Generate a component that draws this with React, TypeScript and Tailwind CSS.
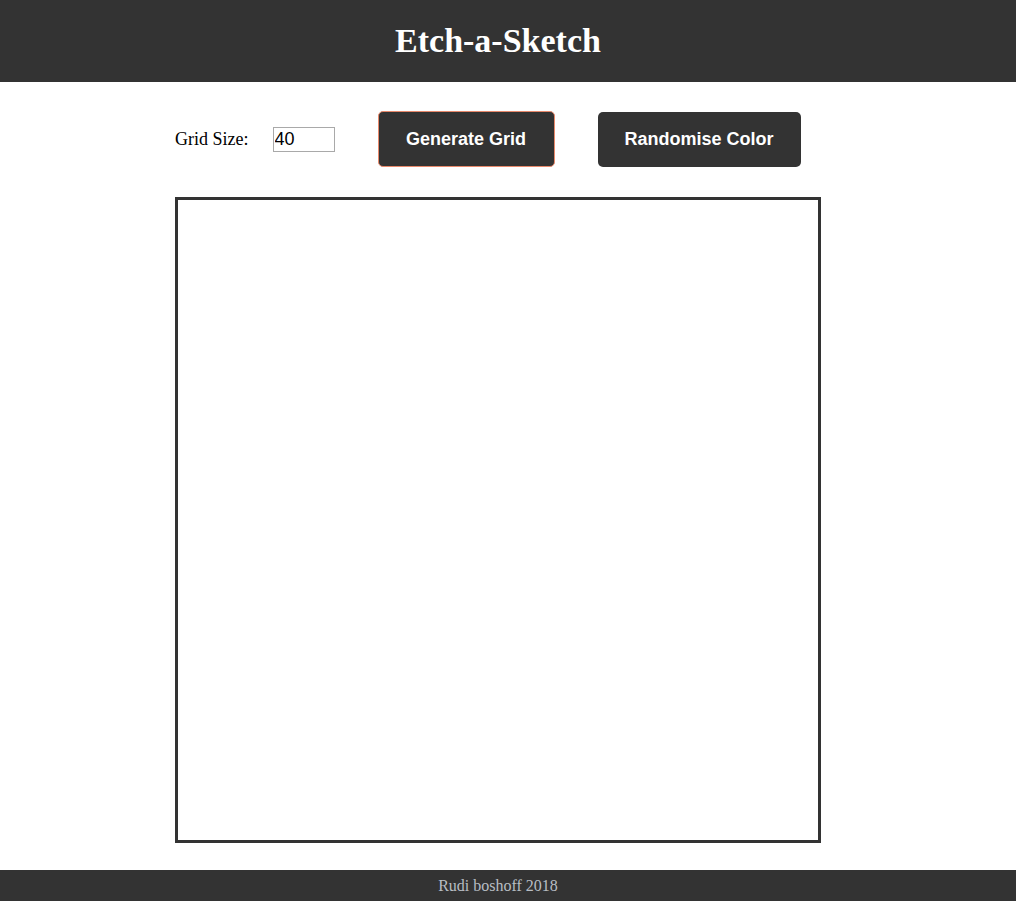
export default function App() {
  return (
    <div className="min-h-screen bg-white" style={{ fontFamily: '"Liberation Serif", "Times New Roman", serif' }}>
      {/* Header */}
      <header className="h-[82px] bg-[#333333] flex items-center justify-center pr-5">
        <h1 className="text-[34px] font-bold text-white leading-none">Etch-a-Sketch</h1>
      </header>

      <main className="pl-[175px] pt-[29px]">
        {/* Controls */}
        <div className="flex items-center h-[56px]">
          <label className="text-[18px] text-black">Grid Size:</label>
          <input
            type="text"
            defaultValue="40"
            className="ml-[24px] w-[62px] h-[25px] border border-[#a9a9a9] px-[1px] text-[18px] text-black outline-none"
            style={{ fontFamily: '"Liberation Sans", Arial, sans-serif' }}
          />
          <button
            className="ml-[43px] w-[177px] h-[56px] rounded-[5px] border border-solid border-[#e8896b] bg-[#333333] text-white text-[18px] font-bold"
            style={{ fontFamily: '"Liberation Sans", Arial, sans-serif' }}
          >
            Generate Grid
          </button>
          <button
            className="ml-[43px] w-[203px] h-[55px] rounded-[5px] bg-[#333333] text-white text-[18px] font-bold"
            style={{ fontFamily: '"Liberation Sans", Arial, sans-serif' }}
          >
            Randomise Color
          </button>
        </div>

        {/* Sketch pad */}
        <div className="mt-[30px] w-[646px] h-[646px] border-[3px] border-[#333333] bg-white" />
      </main>

      {/* Footer */}
      <footer className="mt-[27px] h-[31px] bg-[#333333] flex items-center justify-center pr-5">
        <span className="text-[16px] text-[#b8bec4]">Rudi boshoff 2018</span>
      </footer>
    </div>
  );
}
